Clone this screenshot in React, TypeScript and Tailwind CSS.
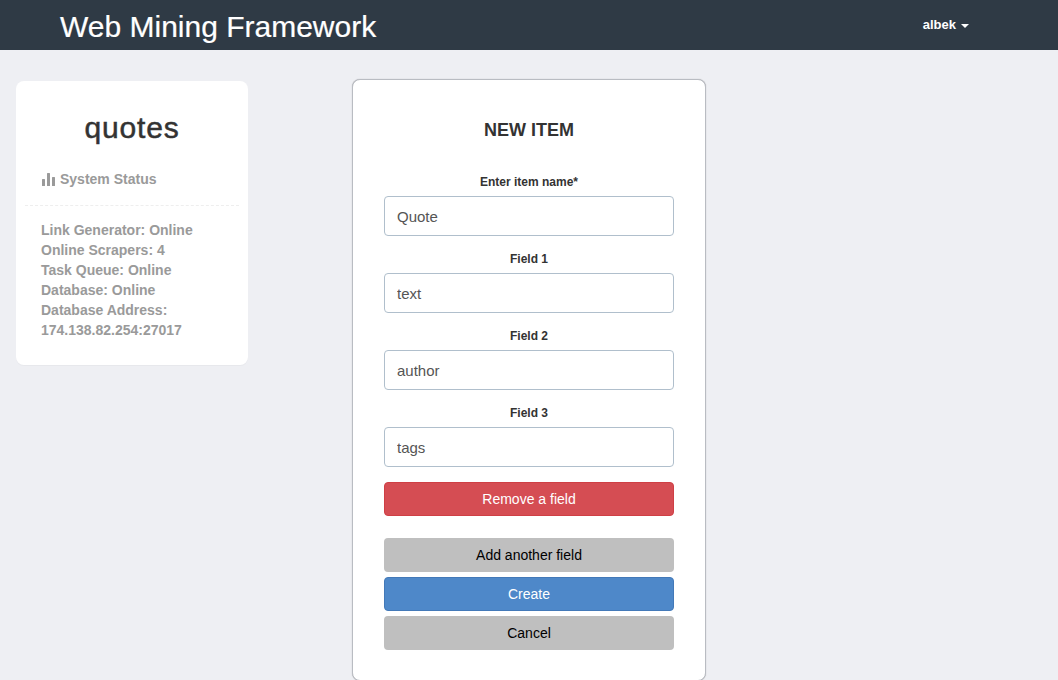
const fields = [
  { label: 'Enter item name*', value: 'Quote' },
  { label: 'Field 1', value: 'text' },
  { label: 'Field 2', value: 'author' },
  { label: 'Field 3', value: 'tags' },
];

const statusLines = [
  'Link Generator: Online',
  'Online Scrapers: 4',
  'Task Queue: Online',
  'Database: Online',
  'Database Address:',
  '174.138.82.254:27017',
];

export default function App() {
  return (
    <div className="h-screen overflow-hidden bg-[#eeeff3] font-['Liberation_Sans',Arial,sans-serif] text-[#333333]">
      <nav className="flex h-[50px] items-center justify-between bg-[#2f3a45] pl-[60px] pr-[89px] text-white">
        <span className="pt-[3px] text-[30px] leading-none [-webkit-text-stroke:0.2px_white]">Web Mining Framework</span>
        <div className="flex items-center gap-[5px] text-[13px] font-bold">
          <span>albek</span>
          <span className="mt-[2px] h-0 w-0 border-x-[4px] border-t-[4px] border-x-transparent border-t-white"></span>
        </div>
      </nav>

      <div className="flex items-start pl-4">
        <aside className="mt-[31px] h-[284px] w-[232px] rounded-lg bg-white px-[9px] pt-[29px] shadow-[0_1px_1px_rgba(0,0,0,0.03)]">
          <h2 className="text-center text-[30px] font-medium leading-[36px] tracking-[0.8px] [-webkit-text-stroke:0.5px_#333333]">quotes</h2>
          <div className="mt-[23px] flex items-center gap-[5px] border-b border-dashed border-[#eeeeee] pb-[16px] pl-[17px] text-[14px] font-bold leading-[20px] text-[#9a9a9a]">
            <svg width="13" height="13" viewBox="0 0 13 13" fill="#9a9a9a" className="shrink-0">
              <rect x="0" y="6" width="3" height="7" rx="0.5" />
              <rect x="5" y="0" width="3" height="13" rx="0.5" />
              <rect x="10" y="4" width="3" height="9" rx="0.5" />
            </svg>
            <span>System Status</span>
          </div>
          <div className="mt-[14px] pl-4 text-[14px] font-bold leading-[20px] text-[#9a9a9a]">
            {statusLines.map((line) => (
              <div key={line}>{line}</div>
            ))}
          </div>
        </aside>

        <main className="ml-[104px] mt-[29px] h-[602px] w-[354px] shrink-0 rounded-lg border border-[#b9bcc2] bg-white px-[31px] pt-[40px] shadow-[0_0_1px_rgba(0,0,0,0.3)]">
          <h3 className="text-center text-[18px] font-bold leading-[20px]">NEW ITEM</h3>
          <div className="mt-[34px] flex flex-col gap-[15px]">
            {fields.map((field) => (
              <div key={field.label}>
                <label className="block text-center text-[12px] font-bold leading-[17px]">{field.label}</label>
                <input
                  readOnly
                  value={field.value}
                  className="mt-[5px] block h-[40px] w-full rounded border border-[#b0bfcc] bg-white px-3 text-[15px] text-[#555555]"
                />
              </div>
            ))}
          </div>
          <button className="mt-[15px] block h-[34px] w-full rounded border border-[#cf3f45] bg-[#d54d53] text-[14px] text-white">Remove a field</button>
          <div className="mt-[22px] flex flex-col gap-[5px]">
            <button className="block h-[34px] w-full rounded bg-[#bfbfbf] text-[14px] text-black">Add another field</button>
            <button className="block h-[34px] w-full rounded border border-[#4379b8] bg-[#4e88c9] text-[14px] text-white">Create</button>
            <button className="block h-[34px] w-full rounded bg-[#bfbfbf] text-[14px] text-black">Cancel</button>
          </div>
        </main>
      </div>
    </div>
  );
}
